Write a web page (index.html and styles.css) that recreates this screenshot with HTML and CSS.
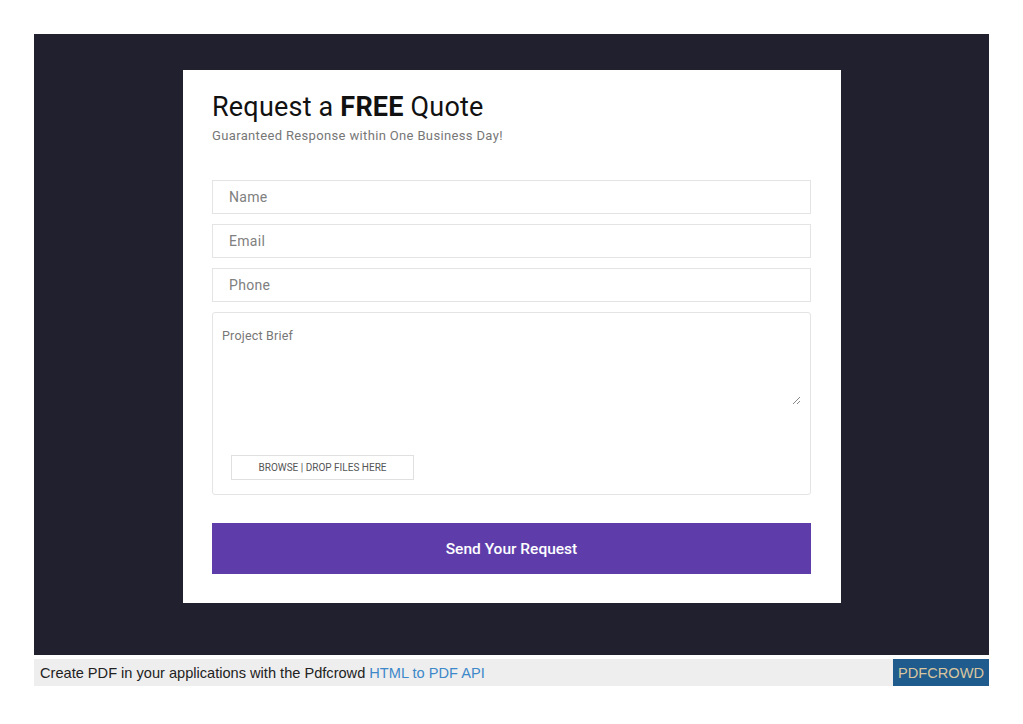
FILE: index.html
```
<!DOCTYPE html>
<html>
<head>
<meta charset="utf-8">
<link rel="stylesheet" href="styles.css">
</head>
<body>
<div class="page">
  <div class="stage">
    <div class="card">
      <h1 class="title">Request a <strong>FREE</strong> Quote</h1>
      <p class="subtitle">Guaranteed Response within One Business Day!</p>
      <form class="form">
        <div class="field">Name</div>
        <div class="field">Email</div>
        <div class="field">Phone</div>
        <div class="brief">
          <div class="brief-area">
            <span class="brief-label">Project Brief</span>
            <svg class="grip" width="9" height="9" viewBox="0 0 9 9"><path d="M8 1 L1 8 M8 5 L5 8" stroke="#888" stroke-width="1"/></svg>
          </div>
          <div class="browse">BROWSE | DROP FILES HERE</div>
        </div>
        <div class="submit">Send Your Request</div>
      </form>
    </div>
  </div>
  <div class="footer">
    <span class="footer-text">Create PDF in your applications with the Pdfcrowd <a class="footer-link">HTML to PDF API</a></span>
    <span class="badge">PDFCROWD</span>
  </div>
</div>
</body>
</html>
```
FILE: styles.css
```
* { box-sizing: border-box; }
html, body { margin: 0; padding: 0; background: #fff; }
.page { padding: 34px 34px 0 34px; width: 1023px; }
.stage {
  background: #20202e;
  height: 621px;
  padding: 36px 0 0 149px;
}
.card {
  background: #fff;
  width: 658px;
  height: 533px;
  padding: 21px 29px 0 29px;
  font-family: Roboto, "DejaVu Sans", sans-serif;
}
.title {
  margin: 0;
  font-size: 27px;
  font-weight: 400;
  color: #111;
  line-height: 32px;
  letter-spacing: 0.2px;
}
.title strong { font-weight: 700; }
.subtitle {
  margin: 5px 0 0 0;
  font-size: 13px;
  color: #777;
  line-height: 16px;
  letter-spacing: 0.35px;
}
.form {
  margin-top: 36px;
  display: flex;
  flex-direction: column;
  gap: 10px;
  width: 599px;
}
.field {
  height: 34px;
  border: 1px solid #e4e4e4;
  padding: 0 16px;
  display: flex;
  align-items: center;
  font-size: 14px;
  color: #808080;
  letter-spacing: 0.3px;
}
.brief {
  height: 183px;
  border: 1px solid #e4e4e4;
  border-radius: 3px;
  display: flex;
  flex-direction: column;
}
.brief-area {
  height: 96px;
  padding: 15px 9px 0 9px;
  display: flex;
  justify-content: space-between;
  align-items: flex-start;
}
.brief-label {
  font-size: 12.5px;
  color: #777;
  letter-spacing: 0.2px;
}
.grip { margin-top: 68px; }
.browse {
  margin: 46px 0 0 18px;
  width: 183px;
  height: 25px;
  border: 1px solid #e0e0e0;
  display: flex;
  align-items: center;
  justify-content: center;
  font-size: 10px;
  color: #555;
}
.submit {
  margin-top: 18px;
  height: 51px;
  background: #5e3dab;
  color: #fff;
  display: flex;
  align-items: center;
  justify-content: center;
  font-size: 15.5px;
  font-weight: 500;
}
.footer {
  margin-top: 4px;
  height: 27px;
  background: #eeeeee;
  display: flex;
  justify-content: space-between;
  align-items: stretch;
  font-family: "Liberation Sans", Arial, sans-serif;
  font-size: 14.6px;
}
.footer-text { padding-left: 6px; display: flex; align-items: center; color: #222; white-space: pre; }
.footer-link { color: #3d88c9; }
.badge {
  background: #1f5b8c;
  color: #d9c69f;
  width: 96px;
  display: flex;
  align-items: center;
  justify-content: center;
}
```
